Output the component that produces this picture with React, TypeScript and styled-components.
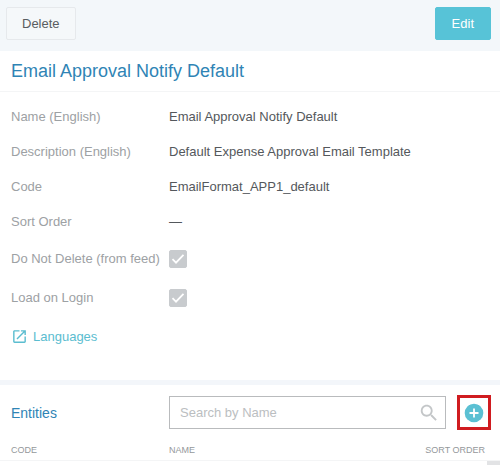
import React from "react";
import styled, { createGlobalStyle } from "styled-components";

const GlobalStyle = createGlobalStyle`
  *, *::before, *::after { box-sizing: border-box; }
  body {
    margin: 0;
    background: #fff;
    color: #54585c;
    font: 13px/20px "Liberation Sans", Arial, Helvetica, sans-serif;
  }
`;

const Page = styled.main`
  display: flex;
  flex-direction: column;
`;

const Toolbar = styled.header`
  display: flex;
  justify-content: space-between;
  padding: 7px 9px 11px 6px;
  background: #f3f7fa;
`;

const Button = styled.button<{ $primary?: boolean }>`
  height: 33px;
  padding: 0 ${(p) => (p.$primary ? "16px" : "15px")};
  border: 1px solid ${(p) => (p.$primary ? "#57c3d7" : "#e6e9ec")};
  border-radius: 2px;
  background: ${(p) => (p.$primary ? "#57c3d7" : "#f5f8fa")};
  color: ${(p) => (p.$primary ? "#fff" : "#595d61")};
  font: inherit;
  cursor: pointer;
`;

const TitleBar = styled.div`
  padding: 8px 11px;
  border-bottom: 1px solid #f4f5f6;
`;

const Title = styled.h1`
  margin: 0;
  color: #2f84b5;
  font-size: 18px;
  font-weight: 400;
  line-height: 24px;
`;

const Details = styled.section`
  display: flex;
  flex-direction: column;
  padding: 7px 11px 24px;
`;

const Row = styled.div<{ $tall?: boolean }>`
  display: grid;
  grid-template-columns: 158px 1fr;
  align-items: center;
  min-height: ${(p) => (p.$tall ? "39px" : "35px")};
`;

const Label = styled.label`
  color: #9da1a4;
`;

const Value = styled.output`
  color: #54585c;
`;

const CheckWrap = styled.span`
  display: grid;
  width: 18px;
  height: 18px;

  > * {
    grid-area: 1 / 1;
  }
`;

const CheckBox = styled.input`
  appearance: none;
  width: 18px;
  height: 18px;
  margin: 0;
  border: 1px solid #c8cbce;
  border-radius: 2px;
  background: #fff;

  &:checked {
    background: #c8cbce;
  }

  &:not(:checked) + svg {
    visibility: hidden;
  }
`;

const LanguagesLink = styled.a`
  display: inline-flex;
  align-items: center;
  align-self: flex-start;
  gap: 5px;
  min-height: 39px;
  color: #5bbdd0;
  text-decoration: none;
`;

const Entities = styled.section`
  border-top: 5px solid #f3f6fa;
`;

const EntitiesBar = styled.div`
  display: grid;
  grid-template-columns: 158px 1fr auto;
  align-items: center;
  padding: 10px 9px 10px 11px;
`;

const SectionTitle = styled.h2`
  margin: 0;
  color: #2f84b5;
  font-size: 14px;
  font-weight: 400;
  line-height: 20px;
`;

const SearchBox = styled.label`
  display: flex;
  align-items: center;
  height: 33px;
  padding: 0 5px 0 10px;
  border: 1px solid #b9bbbd;
`;

const SearchInput = styled.input`
  flex: 1;
  min-width: 0;
  padding: 0;
  border: 0;
  outline: 0;
  background: transparent;
  color: #54585c;
  font: inherit;

  &::placeholder {
    color: #bbbec1;
    opacity: 1;
  }
`;

const AddButton = styled.button`
  display: grid;
  place-items: center;
  width: 34px;
  height: 35px;
  margin-left: 11px;
  padding: 0;
  border: 3px solid #d01c20;
  background: #fff;
  cursor: pointer;
`;

const Table = styled.table`
  width: 100%;
  table-layout: fixed;
  border-collapse: collapse;
  border-bottom: 1px solid #f4f5f6;
`;

const HeadCell = styled.th<{ $width?: string; $end?: boolean }>`
  width: ${(p) => p.$width ?? "auto"};
  padding: ${(p) => (p.$end ? "0 15px 0 0" : "0")};
  color: #94989b;
  font-size: 9px;
  font-weight: 400;
  line-height: 20px;
  text-align: ${(p) => (p.$end ? "right" : "left")};

  &:first-child {
    padding-left: 11px;
  }
`;

const ScrollTrack = styled.div`
  display: flex;
  justify-content: flex-end;
`;

const ScrollThumb = styled.div`
  width: 13px;
  height: 4px;
  background: #e2e3e5;
`;

const fields = [
  { id: "name", label: "Name (English)", value: "Email Approval Notify Default" },
  { id: "description", label: "Description (English)", value: "Default Expense Approval Email Template" },
  { id: "code", label: "Code", value: "EmailFormat_APP1_default" },
  { id: "order", label: "Sort Order", value: "—" },
];

const flags = [
  { id: "keep", label: "Do Not Delete (from feed)" },
  { id: "load", label: "Load on Login" },
];

const CheckMark = () => (
  <svg width="18" height="18" viewBox="0 0 18 18" fill="none" aria-hidden="true" pointerEvents="none">
    <path d="M3.5 9.2 7 12.6 14.5 4.8" stroke="#fff" strokeWidth="1.8" />
  </svg>
);

const OpenIcon = () => (
  <svg width="17" height="17" viewBox="0 0 24 24" fill="currentColor" aria-hidden="true">
    <path d="M19 19H5V5h7V3H5c-1.1 0-2 .9-2 2v14c0 1.1.9 2 2 2h14c1.1 0 2-.9 2-2v-7h-2v7zM14 3v2h3.59l-9.83 9.83 1.41 1.41L19 6.41V10h2V3h-7z" />
  </svg>
);

const SearchIcon = () => (
  <svg width="22" height="22" viewBox="0 0 24 24" fill="#c3c6c8" aria-hidden="true">
    <path d="M15.5 14h-.79l-.28-.27C15.41 12.59 16 11.11 16 9.5 16 5.91 13.09 3 9.5 3S3 5.91 3 9.5 5.91 16 9.5 16c1.61 0 3.09-.59 4.23-1.57l.27.28v.79l5 4.99L20.49 19l-4.99-5zm-6 0C7.01 14 5 11.99 5 9.5S7.01 5 9.5 5 14 7.01 14 9.5 11.99 14 9.5 14z" />
  </svg>
);

const PlusIcon = () => (
  <svg width="20" height="20" viewBox="0 0 20 20" aria-hidden="true">
    <circle cx="10" cy="10" r="9.3" fill="#5bc0d3" />
    <path d="M10 5.5v9M5.5 10h9" stroke="#fff" strokeWidth="1.8" />
  </svg>
);

export default function App() {
  return (
    <Page>
      <GlobalStyle />
      <Toolbar>
        <Button type="button">Delete</Button>
        <Button type="button" $primary>Edit</Button>
      </Toolbar>
      <TitleBar>
        <Title>Email Approval Notify Default</Title>
      </TitleBar>
      <Details>
        {fields.map((f) => (
          <Row key={f.id}>
            <Label htmlFor={f.id}>{f.label}</Label>
            <Value id={f.id}>{f.value}</Value>
          </Row>
        ))}
        {flags.map((f) => (
          <Row key={f.id} $tall>
            <Label htmlFor={f.id}>{f.label}</Label>
            <CheckWrap>
              <CheckBox id={f.id} type="checkbox" defaultChecked disabled />
              <CheckMark />
            </CheckWrap>
          </Row>
        ))}
        <LanguagesLink href="#languages">
          <OpenIcon />
          Languages
        </LanguagesLink>
      </Details>
      <Entities>
        <EntitiesBar>
          <SectionTitle>Entities</SectionTitle>
          <SearchBox>
            <SearchInput type="text" aria-label="Search by Name" placeholder="Search by Name" />
            <SearchIcon />
          </SearchBox>
          <AddButton type="button" aria-label="Add entity">
            <PlusIcon />
          </AddButton>
        </EntitiesBar>
        <Table>
          <thead>
            <tr>
              <HeadCell scope="col" $width="169px">CODE</HeadCell>
              <HeadCell scope="col">NAME</HeadCell>
              <HeadCell scope="col" $end>SORT ORDER</HeadCell>
            </tr>
          </thead>
        </Table>
        <ScrollTrack>
          <ScrollThumb />
        </ScrollTrack>
      </Entities>
    </Page>
  );
}
